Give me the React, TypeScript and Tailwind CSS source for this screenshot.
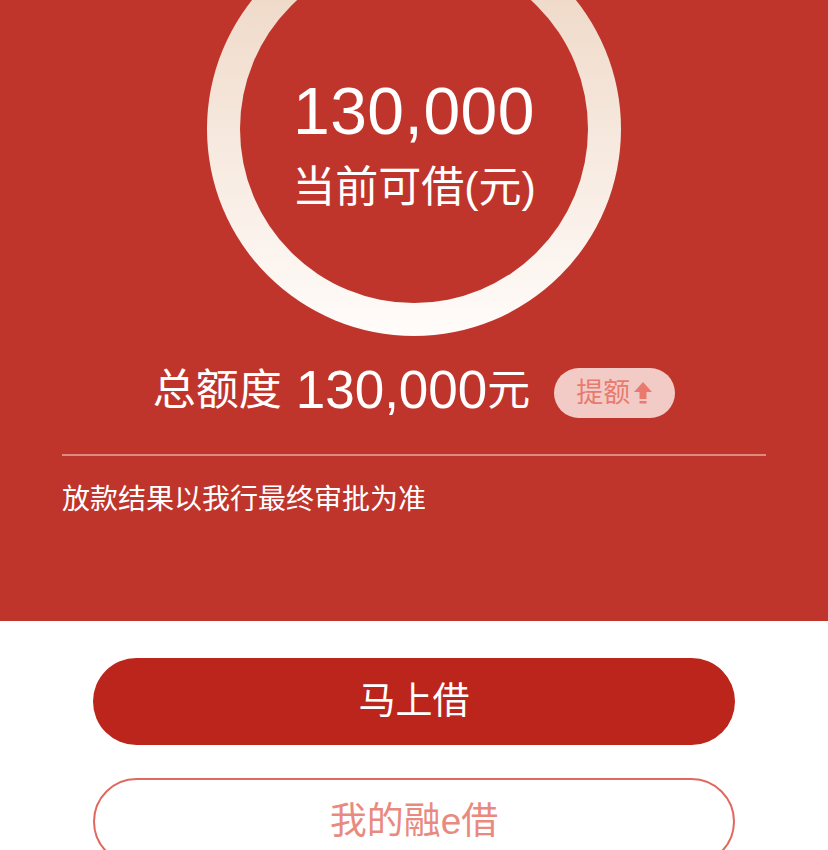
import React from 'react';

const font = { fontFamily: '"Liberation Sans", "Noto Sans CJK SC", sans-serif' };

function ArrowUp() {
  return (
    <svg width="20" height="24" viewBox="0 0 20 24" fill="#e87a6e">
      <path d="M10 1 L19 11 L13.5 11 L13.5 18 L6.5 18 L6.5 11 L1 11 Z" />
      <rect x="6.5" y="20" width="7" height="2.5" />
    </svg>
  );
}

export default function App() {
  return (
    <div className="w-[828px] h-[850px] overflow-hidden bg-white" style={font}>
      {/* Red header with credit ring */}
      <div className="bg-[#bf352c] flex flex-col items-center pb-[102px]">
        <div className="mt-[-78px] w-[414px] h-[414px] rounded-full p-[33px] bg-gradient-to-b from-[#ecd3bf] to-[#fffcfa]">
          <div className="w-full h-full rounded-full bg-[#bf352c] flex flex-col items-center text-white">
            <div className="mt-[118px] text-[66px] leading-[76px] tracking-[0.5px]">130,000</div>
            <div className="mt-[12px] text-[43px] leading-[52px]">当前可借(元)</div>
          </div>
        </div>

        <div className="mt-[26px] h-[56px] flex items-center text-white">
          <span className="text-[43px] leading-[56px]">总额度</span>
          <span className="ml-[14px] text-[53px] leading-[56px]">130,000</span>
          <span className="text-[43px] leading-[56px]">元</span>
          <div className="ml-[24px] h-[50px] w-[121px] rounded-full bg-[#f3cbc6] flex items-center justify-center gap-[3px] mt-[6px]">
            <span className="text-[27px] leading-none text-[#e87a6e]">提额</span>
            <ArrowUp />
          </div>
        </div>

        <div className="self-stretch mx-[62px] mt-[36px] h-[2px] bg-[#dc8a82]" />

        <div className="self-stretch mx-[62px] mt-[24px] text-[28px] leading-[39px] text-white">
          放款结果以我行最终审批为准
        </div>
      </div>

      {/* Actions */}
      <div className="flex flex-col items-center">
        <button className="mt-[37px] w-[642px] h-[87px] rounded-full bg-[#bb251b] text-white text-[37px]">
          马上借
        </button>
        <button className="mt-[33px] w-[642px] h-[87px] rounded-full border-2 border-[#e0685e] text-[#e98a80] text-[37px]">
          我的融e借
        </button>
      </div>
    </div>
  );
}
